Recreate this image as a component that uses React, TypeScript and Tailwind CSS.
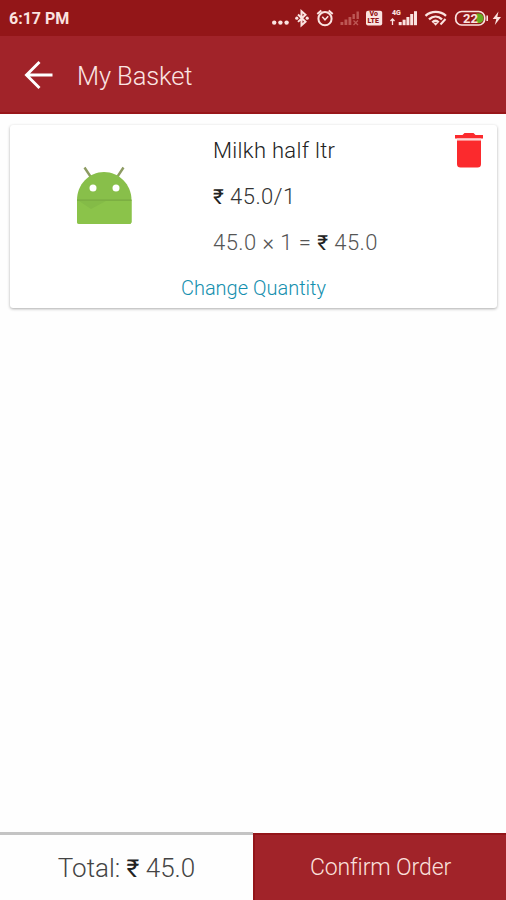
import type { ReactNode } from "react";

interface BasketItem {
  name: string;
  price: string;
  quantity: number;
  total: string;
}

const item: BasketItem = {
  name: "Milkh half ltr",
  price: "45.0",
  quantity: 1,
  total: "45.0",
};

const Rupee = () => <span className="text-[0.95em] font-normal text-[#222]">₹</span>;

const StatusBar = () => (
  <div className="flex h-9 items-center justify-between bg-[#931618] pl-[9px] text-[#fbe3e0]">
    <span className="pt-px text-[16px] leading-5 font-bold">6:17 PM</span>
    <div className="relative h-9 w-[236px]">
      <svg width="236" height="36" viewBox="270 0 236 36" fill="none">
        {/* more notifications */}
        <g fill="#fbe3e0">
          <circle cx="274.2" cy="22.6" r="2.2" />
          <circle cx="280.4" cy="22.6" r="2.2" />
          <circle cx="286.6" cy="22.6" r="2.2" />
        </g>
        {/* bluetooth */}
        <path d="M298 14.5l7.500 7.200-4 3.500V11.200l4 3.500-7.500 7.200" stroke="#fbe3e0" strokeWidth="2" />
        <circle cx="296.800" cy="18.200" r="1.600" fill="#fbe3e0" />
        <circle cx="307.200" cy="18.200" r="1.600" fill="#fbe3e0" />
        {/* alarm */}
        <circle cx="325" cy="18.700" r="6.600" stroke="#fbe3e0" strokeWidth="2" />
        <path d="M317.300 14l4-3.400M332.700 14l-4-3.400" stroke="#fbe3e0" strokeWidth="2" />
        <path d="M322.300 16.800l2.700 3 3.200-3.500" stroke="#fbe3e0" strokeWidth="1.500" />
        {/* empty signal */}
        <g fill="#bd5754">
          <rect x="340.500" y="22" width="2.800" height="3" />
          <rect x="344.500" y="19.500" width="2.800" height="5.500" />
          <rect x="348.500" y="17" width="2.800" height="8" />
          <rect x="352.500" y="14" width="2.400" height="5" />
          <rect x="356.500" y="11.500" width="2.400" height="7.500" />
        </g>
        <path d="M353.500 20.500l4.500 4.500M358 20.500l-4.500 4.500" stroke="#bd5754" strokeWidth="1.300" />
        {/* volte */}
        <rect x="366" y="10.800" width="16.200" height="14.600" rx="2" fill="#fbe3e0" />
        {/* signal */}
        <g fill="#fbe3e0">
          <rect x="398.700" y="22" width="3" height="3.200" />
          <rect x="402.600" y="19.700" width="3" height="5.500" />
          <rect x="406.400" y="17" width="3" height="8.200" />
          <rect x="410.200" y="14" width="3" height="11.200" />
          <rect x="414" y="11.200" width="3" height="14" />
        </g>
        <path d="M392.500 25v-5.500M390.500 21l2-2 2 2" stroke="#fbe3e0" strokeWidth="1.300" />
        {/* wifi */}
        <g stroke="#fbe3e0" strokeWidth="2.400">
          <path d="M425.500 15.800c5.800-5.200 14.700-5.200 20.500 0" />
          <path d="M429 19.300c4-3.600 9.200-3.600 13 0" />
          <path d="M432.300 22.400c2-1.900 4.400-1.900 6.400 0" />
        </g>
        <path d="M433.300 23l2.300 2.700 2.400-2.700z" fill="#fbe3e0" />
        <path d="M440.500 24.500l5-5.500" stroke="#fbe3e0" strokeWidth="2" />
        {/* battery */}
        <rect x="455.700" y="11.500" width="29" height="13.500" rx="6" stroke="#fbe3e0" strokeWidth="1.700" />
        <path d="M476.500 13.500h2.500c2.600 0 4.500 2 4.500 4.700s-1.900 4.800-4.500 4.800h-2.500z" fill="#65ad22" />
        <path d="M487.200 15.500v5.500" stroke="#fbe3e0" strokeWidth="1.600" />
        <path d="M498.500 11.500l-5.800 7.500h3.600l-1.500 6 6.200-8h-3.700z" fill="#fbe3e0" />
      </svg>
      <span className="absolute top-[11px] left-[99.500px] text-[7px] leading-[7px] font-black text-[#931618]">Vo</span>
      <span className="absolute top-[17.500px] left-[97.500px] text-[7px] leading-[7px] font-black text-[#931618]">LTE</span>
      <span className="absolute top-[9px] left-[122px] text-[7px] leading-[8px] font-black">4G</span>
      <span className="absolute top-[11px] left-[193px] text-[13px] leading-[15px] font-bold">22</span>
    </div>
  </div>
);

const BackIcon = () => (
  <svg width="30" height="30" viewBox="0 0 30 30" fill="none" stroke="#fff" strokeWidth="2.900">
    <path d="M28.500 15H2.500M15.500 2l-13 13 13 13" />
  </svg>
);

const AndroidIcon = () => (
  <svg width="56" height="60" viewBox="0 0 56 60">
    <path d="M8.500 1.500l6 9M47.500 1.500l-6 9" stroke="#8d9b62" strokeWidth="2.400" />
    <path d="M1 34C1 18.500 13 6 28 6S55.500 18.500 55.500 34V55.500q0 2.500-2.500 2.500h-49.500Q1 58 1 55.500z" fill="#88bf4a" />
    <path d="M1 34h54.500v21.500q0 2.500-2.500 2.500h-49.500Q1 58 1 55.500z" fill="#8bc34a" />
    <path d="M3 35h27L15 43z" fill="#84bb47" />
    <path d="M1 33.500h54.500v1.200H1z" fill="#77a941" />
    <circle cx="17" cy="22" r="3.500" fill="#fff" />
    <circle cx="40" cy="22" r="3.500" fill="#fff" />
  </svg>
);

const TrashIcon = () => (
  <svg width="28" height="36" viewBox="0 0 28 36" fill="#fb2a2d">
    <path d="M0 3h7.500L9.500 1h9l2 2H28v3.500H0z" />
    <path d="M2 6.500h24v2H2z" fill="#fdd5d5" />
    <path d="M2 8.500h24V32q0 3.500-3.500 3.500h-17Q2 35.500 2 32z" />
  </svg>
);

const Line = ({ className, children }: { className: string; children: ReactNode }) => (
  <p className={`text-[22px] leading-[46px] font-light whitespace-pre ${className}`}>{children}</p>
);

const BasketCard = ({ name, price, quantity, total }: BasketItem) => (
  <section className="mr-[9px] ml-[10px] mt-[11px] h-[183px] rounded-[3px] bg-white shadow-[0_1px_3px_rgba(0,0,0,0.32)]">
    <div className="flex h-[140px]">
      <div className="w-[203px] pt-[41px] pl-[66px]">
        <AndroidIcon />
      </div>
      <div className="flex-1 pt-[3px]">
        <Line className="tracking-[0.3px] text-[#222]">{name}</Line>
        <Line className="tracking-[0.45px] text-[#333]">
          <Rupee /> {price}/{quantity}
        </Line>
        <Line className="tracking-[0.45px] text-[#555]">
          {price} × {quantity} = <Rupee /> {total}
        </Line>
      </div>
      <button className="flex w-[42px] items-start pt-[7px]" aria-label="Remove item">
        <TrashIcon />
      </button>
    </div>
    <button className="block h-[43px] w-full pt-px text-[20px] leading-[45px] font-light text-[#158fae]">
      Change Quantity
    </button>
  </section>
);

export default function App() {
  return (
    <div className="flex h-[900px] w-[506px] flex-col overflow-hidden bg-[#fefefe] font-['Roboto',sans-serif]">
      <StatusBar />
      <header className="flex h-[78px] items-center border-b-2 border-[#981619] bg-[#a12329] pt-px pl-6">
        <BackIcon />
        <h1 className="ml-[23px] pt-[3px] text-[25.500px] font-light tracking-[-0.1px] text-[#fbe5e3]">My Basket</h1>
      </header>
      <main className="flex-1">
        <BasketCard {...item} />
      </main>
      <footer className="flex h-[68px]">
        <div className="flex w-[253px] items-center justify-center border-t-[3px] border-[#c4c4c4] pt-px text-[26px] font-light text-[#444]">
          <span className="whitespace-pre">
            Total: <Rupee /> {item.total}
          </span>
        </div>
        <button className="mt-px flex-1 border-t-2 border-l-2 border-[#931519] bg-[#a12329] pt-px text-[23px] font-light tracking-[-0.1px] text-[#fbe0dd]">
          Confirm Order
        </button>
      </footer>
    </div>
  );
}
